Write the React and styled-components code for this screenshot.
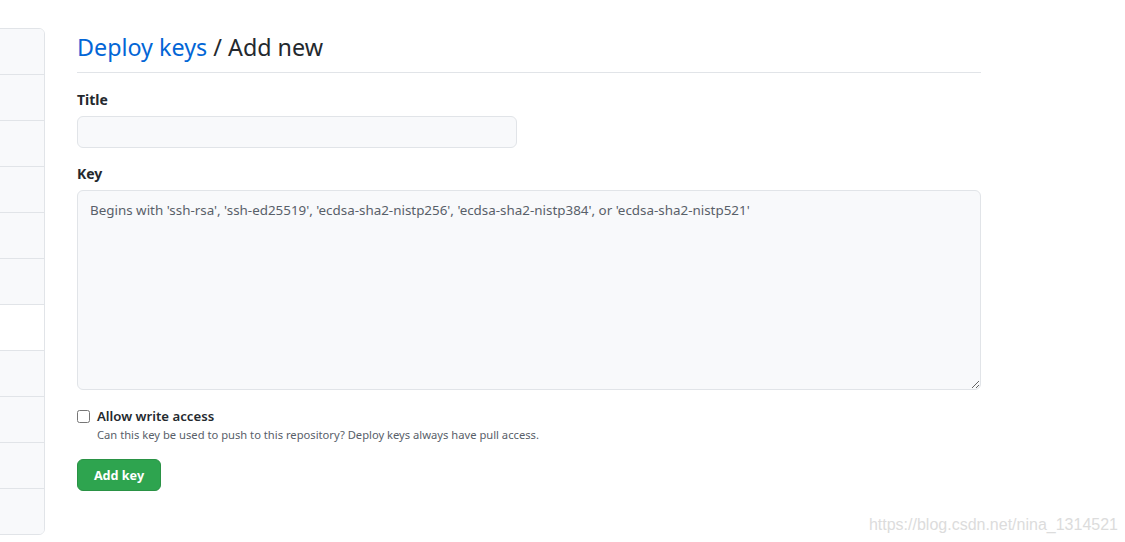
import React from 'react';
import styled, { createGlobalStyle } from 'styled-components';

const GlobalStyle = createGlobalStyle`
  html, body {
    margin: 0;
    padding: 0;
    background: #ffffff;
  }
  body {
    font-family: "Noto Sans", "Liberation Sans", sans-serif;
    color: #24292e;
  }
`;

const Page = styled('div')`
  position: relative;
  display: flex;
  align-items: flex-start;
  gap: 32px;
  width: 1125px;
  height: 542px;
  padding-top: 28px;
  box-sizing: border-box;
  overflow: hidden;
`;

const SideMenu = styled('nav')`
  width: 45px;
  flex-shrink: 0;
  margin-left: -2px;
  border: 1px solid #e1e4e8;
  border-radius: 0 6px 6px 0;
  overflow: hidden;
  display: flex;
  flex-direction: column;
`;

const MenuItem = styled('div')`
  height: 45px;
  background-color: ${props => props.selected ? '#ffffff' : '#f8f9fb'};
  &:not(:last-child) {
    border-bottom: 1px solid #e1e4e8;
  }
`;

const Main = styled('main')`
  width: 904px;
  display: flex;
  flex-direction: column;
`;

const Heading = styled('h2')`
  margin: 0;
  font-size: 23.3px;
  font-weight: 400;
  line-height: 36px;
  padding-top: 1px;
  padding-bottom: 7px;
  border-bottom: 1px solid #e1e4e8;
  color: #24292e;
`;

const HeadingLink = styled('a')`
  color: #0366d6;
  text-decoration: none;
`;

const Label = styled('label')`
  display: block;
  font-size: 14px;
  font-weight: 700;
  line-height: 20px;
  margin-top: ${props => props.first ? '17px' : '16px'};
  margin-bottom: 6px;
`;

const TextInput = styled('input')`
  width: 440px;
  height: 32px;
  box-sizing: border-box;
  border: 1px solid #e1e4e8;
  border-radius: 6px;
  background: #f8f9fb;
  padding: 5px 12px;
  font-size: 14px;
  font-family: inherit;
  outline: none;
`;

const KeyArea = styled('textarea')`
  width: 904px;
  height: 200px;
  box-sizing: border-box;
  border: 1px solid #e1e4e8;
  border-radius: 6px;
  background: #f8f9fb;
  padding: 9px 12px;
  font-size: 13.4px;
  line-height: 20px;
  font-family: inherit;
  color: #24292e;
  outline: none;
  resize: vertical;
  &::placeholder {
    color: #586069;
  }
`;

const CheckRow = styled('div')`
  margin-top: 16px;
  display: flex;
  align-items: center;
  gap: 7px;
`;

const CheckBox = styled('input')`
  width: 13px;
  height: 13px;
  margin: 0;
`;

const CheckLabel = styled('label')`
  font-size: 13.2px;
  font-weight: 600;
  line-height: 20px;
`;

const Note = styled('p')`
  margin: 0 0 0 20px;
  font-size: 11.2px;
  line-height: 18px;
  color: #586069;
`;

const SubmitButton = styled('button')`
  margin-top: 15px;
  align-self: flex-start;
  width: 84px;
  height: 32px;
  padding: 0;
  border: 1px solid #2a9245;
  border-radius: 6px;
  background-color: #2ea44f;
  color: #ffffff;
  font-family: inherit;
  font-size: 12.6px;
  font-weight: 700;
  cursor: pointer;
`;

const Watermark = styled('div')`
  position: absolute;
  right: 7px;
  bottom: 8px;
  font-family: "Liberation Sans", Arial, sans-serif;
  font-size: 16px;
  color: #dcdcdc;
`;

const App = () => {
  const items = Array.from({ length: 11 }, (_, i) => i);
  return (
    <>
      <GlobalStyle />
      <Page>
        <SideMenu>
          {items.map(i => (
            <MenuItem key={i} selected={i === 6} />
          ))}
        </SideMenu>
        <Main>
          <Heading>
            <HeadingLink href="#">Deploy keys</HeadingLink> / Add new
          </Heading>
          <Label first htmlFor="key-title">Title</Label>
          <TextInput id="key-title" type="text" />
          <Label htmlFor="key-body">Key</Label>
          <KeyArea
            id="key-body"
            placeholder="Begins with 'ssh-rsa', 'ssh-ed25519', 'ecdsa-sha2-nistp256', 'ecdsa-sha2-nistp384', or 'ecdsa-sha2-nistp521'"
          />
          <CheckRow>
            <CheckBox type="checkbox" id="write-access" />
            <CheckLabel htmlFor="write-access">Allow write access</CheckLabel>
          </CheckRow>
          <Note>Can this key be used to push to this repository? Deploy keys always have pull access.</Note>
          <SubmitButton type="button">Add key</SubmitButton>
        </Main>
        <Watermark>https://blog.csdn.net/nina_1314521</Watermark>
      </Page>
    </>
  );
};

export default App;
